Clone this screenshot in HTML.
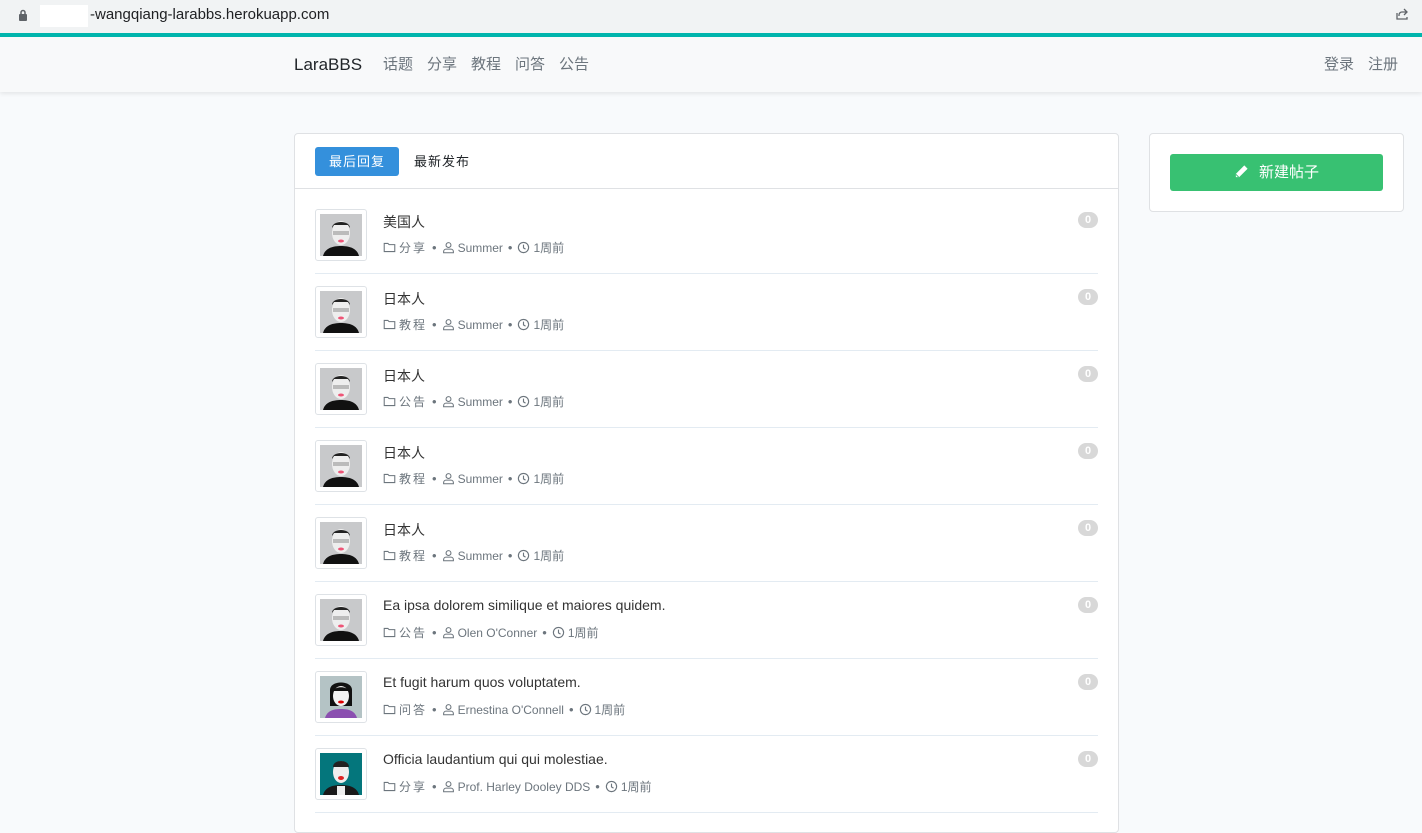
<!DOCTYPE html>
<html><head><meta charset="utf-8"><style>
*{box-sizing:border-box;margin:0;padding:0}
body{width:1422px;height:815px;overflow:hidden;background:#f8fafc;font-family:"Liberation Sans","Noto Sans CJK SC",sans-serif;color:#212529;position:relative}
.chrome{position:absolute;left:0;top:0;width:1422px;height:33px;background:#f1f3f4}
.url{position:absolute;left:5px;top:2px;width:1412px;height:26px;border-radius:13px;background:#f1f3f4;font-size:15px;color:#202124}
.teal{position:absolute;left:0;top:33px;width:1422px;height:4px;background:#00b5ad}
.nav{position:absolute;left:0;top:37px;width:1422px;height:55px;background:#f8f9fa;box-shadow:0 2px 4px rgba(0,0,0,.08)}
.nav span{position:absolute;top:16px;font-size:15px;color:#6c757d}
.card{position:absolute;background:#fff;border:1px solid #dfe1e4;border-radius:4px}
.tab{position:absolute;top:13px;height:29px;line-height:29px;font-size:13px;padding:0 14px;border-radius:3px;letter-spacing:1px}
.item{position:absolute;left:20px;width:783px;height:77px;border-bottom:1px solid #e3ebf2}
.av{position:absolute;left:0;top:12px;width:52px;height:52px;border:1px solid #dee2e6;border-radius:3px;background:#fff;padding:4px}
.title{position:absolute;left:68px;top:15px;font-size:14px;color:#333}
.meta{position:absolute;left:68px;top:42px;font-size:12px;color:#6c757d;display:flex;align-items:center;gap:3px;white-space:nowrap}
.meta svg{width:13px;height:13px}
.dot{font-size:13px;margin:0 2px}
.badge{position:absolute;right:0;top:15px;width:20px;height:16px;border-radius:8px;background:#d8d8d8;color:#fff;font-size:11px;font-weight:bold;text-align:center;line-height:16px}
</style></head><body>
<div class="chrome"><div class="url">
<svg style="position:absolute;left:13px;top:7px" width="10" height="12" viewBox="0 0 10 12"><rect x="1" y="5" width="8" height="7" rx="1" fill="#5f6368"/><path d="M3 5V3.5a2 2 0 0 1 4 0V5" stroke="#5f6368" stroke-width="1.5" fill="none"/></svg>
<div style="position:absolute;left:35px;top:3px;width:48px;height:22px;background:#fff"></div>
<span style="position:absolute;left:85px;top:4px">-wangqiang-larabbs.herokuapp.com</span>
<svg style="position:absolute;right:8px;top:5px" width="14" height="14" viewBox="0 0 14 14" fill="none" stroke="#5f6368" stroke-width="1.3"><path d="M9 2l3 3-3 3M12 5H7a3 3 0 0 0-3 3v1M2 6v6h10v-2"/></svg>
</div></div>
<div class="teal"></div>
<div class="nav">
<span style="left:294px;font-size:17px;top:18px;color:#212529">LaraBBS</span>
<span style="left:383px">话题</span><span style="left:427px">分享</span><span style="left:471px">教程</span><span style="left:515px">问答</span><span style="left:559px">公告</span>
<span style="left:1324px">登录</span><span style="left:1368px">注册</span>
</div>
<div class="card" style="left:294px;top:133px;width:825px;height:700px">
<div style="height:55px;border-bottom:1px solid #dfe1e4;position:relative">
<div class="tab" style="left:20px;background:#3490dc;color:#fff">最后回复</div>
<div class="tab" style="left:105px;color:#212529">最新发布</div>
</div>
<div id="list"></div>
</div>
<div class="card" style="left:1149px;top:133px;width:255px;height:79px">
<div style="position:absolute;left:20px;top:20px;width:213px;height:37px;background:#38c172;border-radius:3px;color:#fff;font-size:15px;text-align:center;line-height:37px">
<svg style="vertical-align:-2px;margin-right:10px" width="15" height="15" viewBox="0 0 16 16"><path d="M11 1.5l3.5 3.5-9 9H2v-3.5z" fill="#fff"/><path d="M2 11l3 3" stroke="#38c172" stroke-width="1"/></svg>新建帖子</div>
</div>
<script>
const ic={f:'<svg viewBox="0 0 16 16" fill="none" stroke="#6c757d" stroke-width="1.3"><path d="M1.5 3h4.5l1.5 1.5h7v8.5h-13z"/></svg>',
u:'<svg viewBox="0 0 16 16" fill="none" stroke="#6c757d" stroke-width="1.3"><circle cx="8" cy="5" r="3"/><path d="M2 14.5v-1.5a3 3 0 0 1 3-3h6a3 3 0 0 1 3 3v1.5z"/></svg>',
c:'<svg viewBox="0 0 16 16" fill="none" stroke="#6c757d" stroke-width="1.4"><circle cx="8" cy="8" r="6.3"/><path d="M8 4.5V8.5l2.5 1.5"/></svg>'};
const av={a:'<svg width="42" height="42"><rect width="42" height="42" fill="#c8c9cb"/><path d="M3 42c2-8 10-10 18-10s16 2 18 10z" fill="#111"/><ellipse cx="21" cy="19" rx="9" ry="12" fill="#eee"/><path d="M12 14c0-8 18-8 18 0l-2-3h-14z" fill="#222"/><rect x="13" y="17" width="16" height="4" fill="#bbb"/><ellipse cx="21" cy="27" rx="3" ry="1.5" fill="#e57"/></svg>',
b:'<svg width="42" height="42"><rect width="42" height="42" fill="#b4c3c5"/><path d="M5 42c2-7 8-9 16-9s14 2 16 9z" fill="#8b4fb0"/><path d="M10 30V14c0-10 22-10 22 0v16z" fill="#111"/><ellipse cx="21" cy="20" rx="8" ry="10" fill="#f3f3f3"/><path d="M13 15c2-5 14-5 16 0z" fill="#111"/><ellipse cx="21" cy="26" rx="3" ry="1.5" fill="#d00"/></svg>',
c:'<svg width="42" height="42"><rect width="42" height="42" fill="#04767c"/><path d="M3 42c2-8 10-10 18-10s16 2 18 10z" fill="#1a1a1a"/><path d="M17 33h8v9h-8z" fill="#eee"/><ellipse cx="21" cy="19" rx="8" ry="11" fill="#eee"/><path d="M13 14c0-8 16-8 16 0z" fill="#222"/><ellipse cx="21" cy="25" rx="3" ry="2" fill="#d22"/></svg>'};
const d=[['美国人','分享','Summer','a'],['日本人','教程','Summer','a'],['日本人','公告','Summer','a'],['日本人','教程','Summer','a'],['日本人','教程','Summer','a'],['Ea ipsa dolorem similique et maiores quidem.','公告',"Olen O'Conner",'a'],['Et fugit harum quos voluptatem.','问答',"Ernestina O'Connell",'b'],['Officia laudantium qui qui molestiae.','分享','Prof. Harley Dooley DDS','c']];
let h='';d.forEach((r,i)=>{h+=`<div class="item" style="top:${63+i*77}px"><div class="av">${av[r[3]]}</div><div class="title">${r[0]}</div><div class="meta">${ic.f}<span style="letter-spacing:2px">${r[1]}</span><span class="dot">•</span>${ic.u}<span>${r[2]}</span><span class="dot">•</span>${ic.c}<span>1周前</span></div><div class="badge">0</div></div>`});
document.getElementById('list').innerHTML=h;
</script>
</body></html>
